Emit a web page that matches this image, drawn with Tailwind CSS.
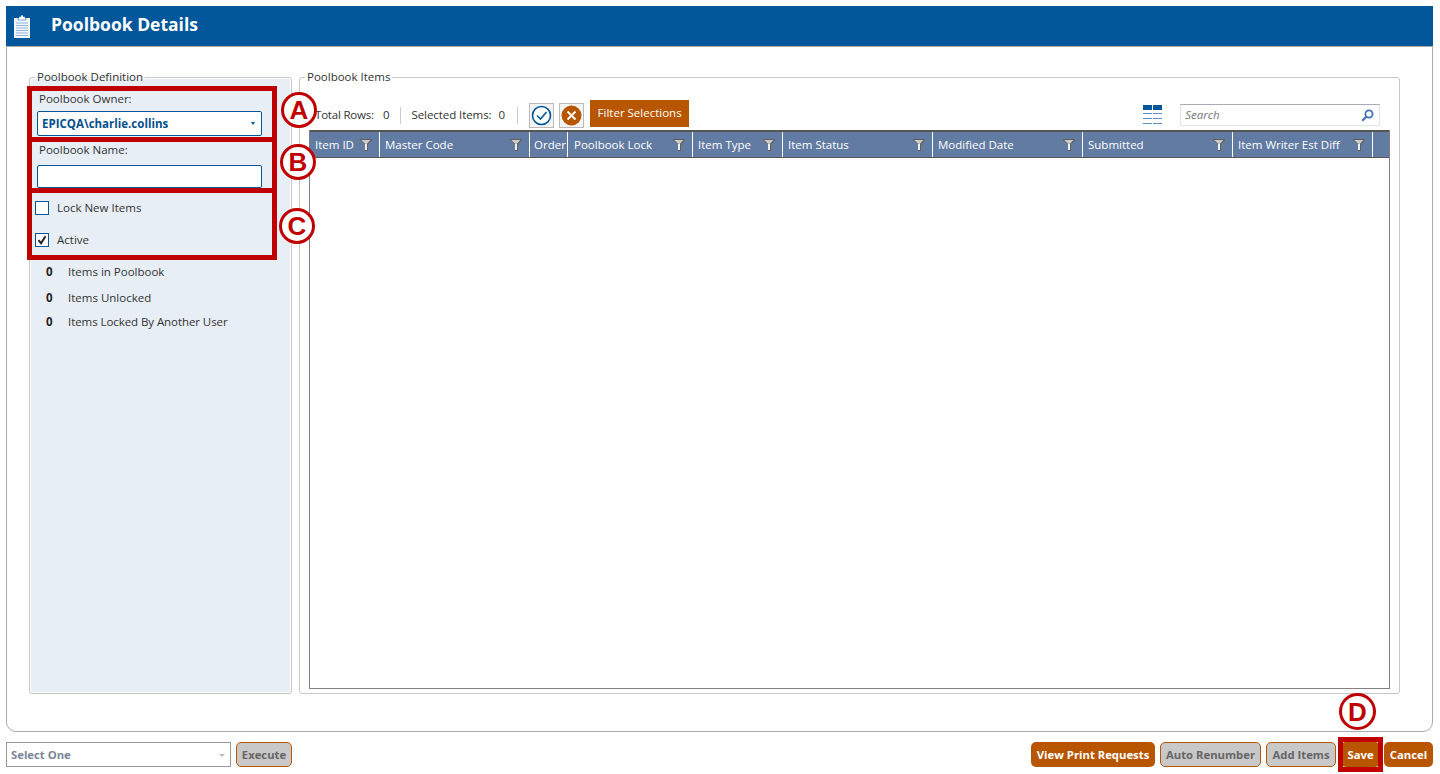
<!DOCTYPE html>
<html lang="en">
<head>
  <meta charset="UTF-8">
  <title>Poolbook Details</title>
  <script src="https://cdn.jsdelivr.net/npm/@tailwindcss/browser@4"></script>
</head>
<body class="relative h-[774px] w-[1440px] overflow-hidden bg-white font-['Open_Sans',sans-serif] text-[11.5px] text-[#333]">
  <svg class="hidden">
    <symbol id="funnel" viewBox="0 0 12 12">
      <path d="M0 0h12v1L8 5.5V12H5V5.5L0 1z" fill="#5f5f5f"/>
      <path d="M1.2 1h9.2L7 4.8H5z" fill="#c9c9c9"/>
      <path d="M5 4.8h2V11H5z" fill="#f0f0f0"/>
    </symbol>
  </svg>

  <div class="pl-[6px] pr-[7px] pt-[6px]">
    <!-- Header -->
    <header class="flex h-[40px] items-center bg-[#02569a] text-white">
      <svg class="ml-[8px] h-[23px] w-[16px]" viewBox="0 0 16 23">
        <path d="M0 3h16v20H0z" fill="#f4f7fa"/>
        <path d="M5 3V1.5h2V0h2v1.5h2V3h1v2H4V3z" fill="#fff" stroke="#02569a" stroke-width=".5"/>
        <path d="M2 8h12M2 10.5h12M2 13h12M2 15.5h12M2 18h12M2 20.5h12" stroke="#8fb4d6" stroke-width="1"/>
      </svg>
      <h1 class="ml-[21px] -translate-y-[2px] text-[17.5px] font-bold">Poolbook Details</h1>
    </header>

    <!-- Main panel -->
    <main class="flex h-[686px] gap-[7px] rounded-b-[10px] border border-[#aaa] pl-[22px] pt-[22px]">
      <fieldset class="h-[625px] w-[263px] rounded-[3px] border border-[#c8c8c8] bg-[#e8eef6] pl-[7px] shadow-[inset_0_0_0_1px_white]">
        <legend class="-ml-[2px] px-[2px] leading-[16px]">Poolbook Definition</legend>
        <label class="ml-[2px] mt-[6px] block leading-[16px]">Poolbook Owner:</label>
        <div class="mt-[4px] flex h-[25px] w-[225px] items-center justify-between rounded-[2px] border border-[#02569a] bg-white pl-[4px] pr-[6px] font-bold text-[#02508f]">
          <span>EPICQA\charlie.collins</span>
          <span class="h-0 w-0 border-x-[2.5px] border-t-[3px] border-x-transparent border-t-[#02569a]"></span>
        </div>
        <label class="ml-[2px] mt-[6px] block leading-[16px]">Poolbook Name:</label>
        <div class="mt-[7px] h-[23px] w-[225px] rounded-[2px] border border-[#02569a] bg-white"></div>
        <div class="-ml-[2px] mt-[13px] flex h-[14px] items-center gap-[8px]">
          <span class="h-[14px] w-[14px] border border-[#02569a] bg-white"></span>
          <span>Lock New Items</span>
        </div>
        <div class="-ml-[2px] mt-[18px] flex h-[14px] items-center gap-[8px]">
          <span class="h-[14px] w-[14px] border border-[#02569a] bg-white">
            <svg viewBox="0 0 12 12" class="h-[12px] w-[12px]"><path d="M2.5 6.2l2.5 3 4.5-7" fill="none" stroke="#222" stroke-width="2"/></svg>
          </span>
          <span>Active</span>
        </div>
        <div class="ml-[9px] mt-[17px] flex h-[16px] items-center"><b class="w-[22px] text-[#222]">0</b><span>Items in Poolbook</span></div>
        <div class="ml-[9px] mt-[10px] flex h-[16px] items-center"><b class="w-[22px] text-[#222]">0</b><span>Items Unlocked</span></div>
        <div class="ml-[9px] mt-[8px] flex h-[16px] items-center"><b class="w-[22px] text-[#222]">0</b><span class="tracking-[-0.07px]">Items Locked By Another User</span></div>
      </fieldset>

      <fieldset class="h-[625px] w-[1101px] rounded-[3px] border border-[#c8c8c8] pl-[9px]">
        <legend class="-ml-[4px] px-[2px] leading-[16px]">Poolbook Items</legend>
        <div class="mt-[15px] flex h-[30px] items-center">
          <span class="ml-[6px] tracking-[-0.2px]">Total Rows:</span>
          <span class="ml-[9px]">0</span>
          <span class="ml-[11px] h-[17px] w-px bg-[#ccc]"></span>
          <span class="ml-[10px] tracking-[-0.07px]">Selected Items:</span>
          <span class="ml-[7px]">0</span>
          <span class="ml-[12px] h-[17px] w-px bg-[#ccc]"></span>
          <button class="ml-[11px] flex h-[25px] w-[25px] items-center justify-center border border-[#bbb] bg-[#f4f4f4]">
            <svg viewBox="0 0 21 21" class="h-[21px] w-[21px]"><circle cx="10.5" cy="10.5" r="9" fill="#fff" stroke="#02569a" stroke-width="1.6"/><path d="M6 10.5l3.5 3.5 6-7" fill="none" stroke="#02569a" stroke-width="1.6"/></svg>
          </button>
          <button class="ml-[5px] flex h-[25px] w-[25px] items-center justify-center border border-[#bbb] bg-[#f4f4f4]">
            <svg viewBox="0 0 21 21" class="h-[21px] w-[21px]"><circle cx="10.5" cy="10.5" r="10" fill="#b85600"/><path d="M6.5 6.5l8 8M14.5 6.5l-8 8" stroke="#fff" stroke-width="1.8"/></svg>
          </button>
          <button class="ml-[6px] h-[27px] w-[99px] -translate-y-[2px] bg-[#b85600] text-white">Filter Selections</button>
          <svg class="ml-[454px] h-[20px] w-[19px]" viewBox="0 0 19 20">
            <path d="M0 0h9v5H0zM10 0h9v5h-9z" fill="#02569a"/>
            <path d="M0 8.5h9M10 8.5h9M0 13.5h9M10 13.5h9M0 18.5h9M10 18.5h9" stroke="#5b92c2" stroke-width="1"/>
          </svg>
          <div class="ml-[18px] flex h-[22px] w-[200px] items-center justify-between border border-[#e2e4e8] border-t-[#a9a9b8] pl-[4px] pr-[5px] italic text-[#777]">
            <span>Search</span>
            <svg viewBox="0 0 13 13" class="h-[13px] w-[13px]"><circle cx="8" cy="5" r="3.6" fill="none" stroke="#3f72b0" stroke-width="1.8"/><path d="M5.3 7.7L1.2 11.8" stroke="#3f72b0" stroke-width="2.2"/></svg>
          </div>
        </div>

        <!-- Grid -->
        <div class="h-[559px] w-[1081px] border border-t-0 border-[#808080]">
          <div class="flex h-[28px] border-y-2 border-t-[#555] border-b-[#555] bg-[#627ba3] pl-px leading-none text-white [border-bottom-width:1px]">
            <div class="flex w-[69px] items-center justify-between border-r border-white pl-[4px] pr-[7px]">Item ID<svg class="h-[12px] w-[12px]"><use href="#funnel"/></svg></div>
            <div class="flex w-[150px] items-center justify-between border-r border-white pl-[5px] pr-[7px]">Master Code<svg class="h-[12px] w-[12px]"><use href="#funnel"/></svg></div>
            <div class="flex w-[38px] items-center overflow-hidden border-r border-white pl-[4px]">Order</div>
            <div class="flex w-[125px] items-center justify-between border-r border-white pl-[6px] pr-[7px]">Poolbook Lock<svg class="h-[12px] w-[12px]"><use href="#funnel"/></svg></div>
            <div class="flex w-[90px] items-center justify-between border-r border-white pl-[5px] pr-[7px]">Item Type<svg class="h-[12px] w-[12px]"><use href="#funnel"/></svg></div>
            <div class="flex w-[150px] items-center justify-between border-r border-white pl-[5px] pr-[7px]">Item Status<svg class="h-[12px] w-[12px]"><use href="#funnel"/></svg></div>
            <div class="flex w-[150px] items-center justify-between border-r border-white pl-[5px] pr-[7px]">Modified Date<svg class="h-[12px] w-[12px]"><use href="#funnel"/></svg></div>
            <div class="flex w-[150px] items-center justify-between border-r border-white pl-[5px] pr-[7px]">Submitted<svg class="h-[12px] w-[12px]"><use href="#funnel"/></svg></div>
            <div class="flex w-[140px] items-center justify-between border-r border-white pl-[5px] pr-[7px]">Item Writer Est Diff<svg class="h-[12px] w-[12px]"><use href="#funnel"/></svg></div>
            <div class="flex-1"></div>
          </div>
        </div>
      </fieldset>
    </main>

    <!-- Footer actions -->
    <footer class="mt-[10px] flex h-[25px] items-center text-[11.3px] font-bold">
      <div class="flex h-[25px] w-[225px] items-center justify-between border border-[#999] pl-[4px] pr-[5px] pt-[2px] text-[#7b8698]">
        <span>Select One</span>
        <span class="h-0 w-0 border-x-[3px] border-t-[3px] border-x-transparent border-t-[#bbb]"></span>
      </div>
      <button class="ml-[5px] h-[25px] w-[56px] rounded-[5px] border border-[#b85600] bg-[#c8c8c8] pt-[2px] text-[#666]">Execute</button>
      <button class="ml-auto h-[25px] w-[124px] rounded-[5px] bg-[#b85600] pt-[2px] text-white">View Print Requests</button>
      <button class="ml-[5px] h-[25px] w-[101px] rounded-[5px] border border-[#b85600] bg-[#c8c8c8] pt-[2px] text-[#666]">Auto Renumber</button>
      <button class="ml-[5px] h-[25px] w-[70px] rounded-[5px] border border-[#b85600] bg-[#c8c8c8] pt-[2px] text-[#666]">Add Items</button>
      <button class="ml-[5px] h-[25px] w-[39px] rounded-[5px] bg-[#b85600] pt-[2px] text-white">Save</button>
      <button class="ml-[4px] h-[25px] w-[49px] rounded-[5px] bg-[#b85600] pt-[2px] text-white">Cancel</button>
    </footer>
  </div>

  <!-- Red annotations -->
  <div class="absolute left-[27px] top-[86px] h-[56px] w-[250px] border-[5px] border-[#c00000]"></div>
  <div class="absolute left-[27px] top-[137px] h-[56px] w-[250px] border-[5px] border-[#c00000]"></div>
  <div class="absolute left-[27px] top-[188px] h-[72px] w-[250px] border-[5px] border-[#c00000]"></div>
  <div class="absolute left-[1338px] top-[737px] h-[35px] w-[45px] border-[5px] border-[#c00000]"></div>
  <div class="absolute left-[281px] top-[92px] flex h-[36px] w-[36px] items-center justify-center rounded-full border-[3px] border-[#c00000] bg-white font-['Liberation_Sans',sans-serif] text-[26px] font-bold leading-none text-[#c00000]">A</div>
  <div class="absolute left-[280px] top-[144px] flex h-[36px] w-[36px] items-center justify-center rounded-full border-[3px] border-[#c00000] bg-white font-['Liberation_Sans',sans-serif] text-[26px] font-bold leading-none text-[#c00000]">B</div>
  <div class="absolute left-[279px] top-[208px] flex h-[36px] w-[36px] items-center justify-center rounded-full border-[3px] border-[#c00000] bg-white font-['Liberation_Sans',sans-serif] text-[26px] font-bold leading-none text-[#c00000]">C</div>
  <div class="absolute left-[1339px] top-[693px] flex h-[37px] w-[37px] items-center justify-center rounded-full border-[3px] border-[#c00000] bg-white font-['Liberation_Sans',sans-serif] text-[26px] font-bold leading-none text-[#c00000]">D</div>
</body>
</html>
